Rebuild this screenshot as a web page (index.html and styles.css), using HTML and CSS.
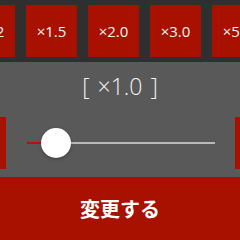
FILE: index.html
```html
<!DOCTYPE html>
<html lang="ja">
<head>
  <meta charset="UTF-8">
  <meta name="viewport" content="width=device-width, initial-scale=1.0">
  <title>倍率</title>
  <link rel="stylesheet" href="styles.css">
</head>
<body>
  <div class="rate-bar">
    <div class="rate-list">
      <div class="rate-btn">×1.2</div>
      <div class="rate-btn">×1.5</div>
      <div class="rate-btn">×2.0</div>
      <div class="rate-btn">×3.0</div>
      <div class="rate-btn">×5.0</div>
    </div>
  </div>
  <div class="panel">
    <div class="current">[ ×1.0 ]</div>
    <div class="slider-row">
      <div class="step-btn minus"></div>
      <div class="track">
        <div class="track-fill"></div>
        <div class="track-rest"></div>
        <div class="thumb"></div>
      </div>
      <div class="step-btn plus"></div>
    </div>
  </div>
  <div class="submit">変更する</div>
</body>
</html>
```

FILE: styles.css
```css
* { box-sizing: border-box; margin: 0; padding: 0; }
html, body { overflow: hidden; }
body {
  width: 240px;
  height: 240px;
  font-family: "Open Sans", "Noto Sans CJK JP", sans-serif;
  background-color: #595959;
  color: #fff;
}
.rate-bar {
  height: 62px;
  background-color: #2f2f2f;
  padding-top: 5px;
  overflow: hidden;
}
.rate-list {
  display: flex;
  gap: 11px;
  margin-left: -36px;
}
.rate-btn {
  flex: 0 0 51px;
  height: 52px;
  background-color: #a81000;
  display: flex;
  align-items: center;
  justify-content: center;
  font-size: 15px;
  color: #f4f4f4;
}
.panel {
  height: 115px;
  padding-top: 10px;
  overflow: hidden;
}
.current {
  height: 28px;
  line-height: 28px;
  text-align: center;
  font-size: 23px;
  font-weight: 300;
  word-spacing: 2px;
  color: #f2f2f2;
}
.slider-row {
  display: flex;
  align-items: center;
  margin-top: 17px;
  height: 52px;
}
.step-btn {
  flex: 0 0 40px;
  height: 52px;
  background-color: #a81000;
}
.minus { margin-left: -34px; }
.track {
  position: relative;
  flex: 0 0 188px;
  height: 30px;
  margin: 0 20px 0 21px;
  display: flex;
  align-items: center;
}
.track-fill {
  width: 28px;
  height: 2px;
  background-color: #b81200;
}
.track-rest {
  flex: 1;
  height: 2px;
  background-color: #b9b9b9;
}
.thumb {
  position: absolute;
  left: 14px;
  top: 0;
  width: 30px;
  height: 30px;
  border-radius: 50%;
  background-color: #fff;
  box-shadow: 0 1px 3px rgba(0, 0, 0, 0.35);
}
.submit {
  height: 63px;
  background-color: #a81000;
  display: flex;
  align-items: center;
  justify-content: center;
  font-family: "Noto Sans CJK JP", sans-serif;
  font-size: 20px;
  font-weight: bold;
  color: #fff;
}
```
